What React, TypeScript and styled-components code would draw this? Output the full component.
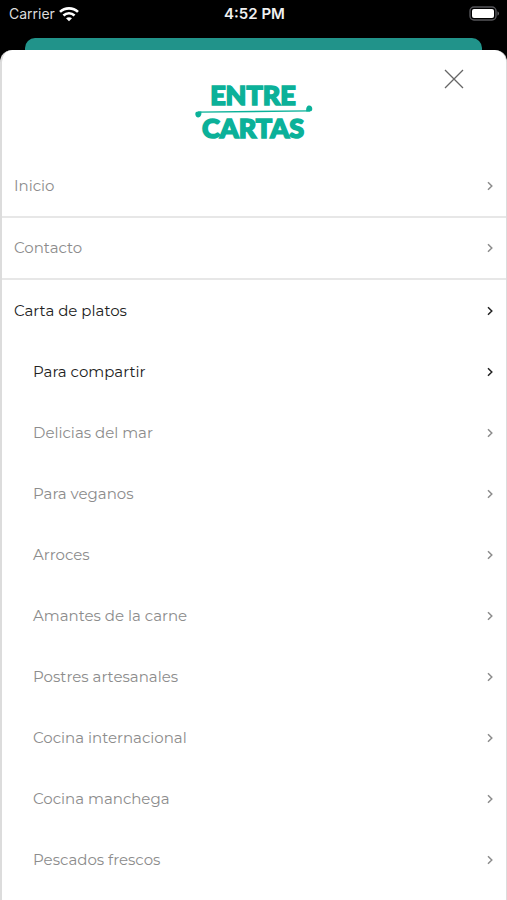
import React from "react";
import styled, { createGlobalStyle } from "styled-components";

const GlobalStyle = createGlobalStyle`
  *, *::before, *::after { box-sizing: border-box; }
  body { margin: 0; background: #000; font-family: Montserrat, Inter, sans-serif; }
`;

const Screen = styled.div`
  display: flex;
  flex-direction: column;
  min-height: 100vh;
  background: #000;
`;

const StatusBar = styled.header`
  display: grid;
  grid-template-columns: 1fr auto 1fr;
  align-items: center;
  height: 38px;
  padding: 0 7px 11px 9px;
  color: #fff;
  font: 400 15px/20px Inter, sans-serif;
`;

const Carrier = styled.div`
  display: flex;
  align-items: center;
  gap: 4px;
  color: #dcdcdc;
  font-size: 14px;
`;

const Clock = styled.time`
  font-weight: 600;
  color: #f0f0f0;
`;

const Battery = styled.svg`
  justify-self: end;
`;

const PreviousCard = styled.div`
  height: 12px;
  margin: 0 25px;
  border-radius: 10px 10px 0 0;
  background: #21938a;
`;

const Sheet = styled.main`
  flex: 1;
  border: solid #dcdcdc;
  border-width: 0 1px 0 2px;
  border-radius: 12px 12px 0 0;
  background: #fff;
`;

const SheetHeader = styled.div`
  display: grid;
  grid-template-columns: 1fr auto 1fr;
  align-items: start;
  height: 106px;
  padding-top: 17px;
`;

const Logo = styled.svg`
  grid-column: 2;
  margin-top: 11px;
  fill: #0bb199;
  stroke: #0bb199;
  font: 900 27px Lato, sans-serif;
`;

const CloseButton = styled.button`
  justify-self: end;
  display: flex;
  margin-right: 40px;
  padding: 0;
  border: 0;
  background: none;
  cursor: pointer;
`;

const List = styled.ul`
  margin: 0;
  padding: 0;
  list-style: none;
`;

const Item = styled.li<{ $divided?: boolean }>`
  border-bottom: ${(p) => (p.$divided ? "2px solid #e7e7e7" : "0")};
`;

const ItemLink = styled.a<{ $active?: boolean; $nested?: boolean; $short?: boolean }>`
  display: flex;
  align-items: center;
  justify-content: space-between;
  height: ${(p) => (p.$short ? 60 : 61)}px;
  padding: 0 12px 0 ${(p) => (p.$nested ? 31 : 12)}px;
  color: ${(p) => (p.$active ? "#222" : "#8c8c8c")};
  font-size: 15px;
  line-height: 20px;
  text-decoration: none;
`;

const topItems = [
  { label: "Inicio", divided: true },
  { label: "Contacto", divided: true },
  { label: "Carta de platos", active: true },
];

const dishes = [
  "Para compartir",
  "Delicias del mar",
  "Para veganos",
  "Arroces",
  "Amantes de la carne",
  "Postres artesanales",
  "Cocina internacional",
  "Cocina manchega",
  "Pescados frescos",
];

const Chevron = () => (
  <svg width="8" height="10" viewBox="0 0 8 10" fill="none" stroke="currentColor" strokeWidth="1.5" aria-hidden="true">
    <path d="M2 1.2 5.8 5 2 8.8" />
  </svg>
);

const WifiIcon = () => (
  <svg width="20" height="16" viewBox="0 0 18 14" fill="none" stroke="#fff" strokeWidth="2.4" aria-hidden="true">
    <path d="M.9 5.1C5.4.9 12.6.9 17.1 5.1" />
    <path d="M4 8.3c2.9-2.6 7.1-2.6 10 0" />
    <path d="M6.3 10.8c1.6-1.3 3.8-1.3 5.4 0L9 13.6z" fill="#fff" stroke="none" />
  </svg>
);

export default function App() {
  return (
    <>
      <GlobalStyle />
      <Screen>
        <StatusBar>
          <Carrier>
            Carrier
            <WifiIcon />
          </Carrier>
          <Clock>4:52 PM</Clock>
          <Battery width="31" height="15" viewBox="0 0 31 15" aria-label="Battery full">
            <rect x="1" y="1" width="26" height="13" rx="4" fill="none" stroke="#55555a" strokeWidth="1.4" />
            <rect x="3" y="3" width="22" height="9" rx="2" fill="#fff" />
            <path d="M28.5 5.3c2 .8 2 3.6 0 4.4z" fill="#66666a" />
          </Battery>
        </StatusBar>
        <PreviousCard />
        <Sheet>
          <SheetHeader>
            <Logo width="120" height="70" viewBox="0 0 120 70" role="img" aria-label="Entre Cartas">
              <text x="59" y="27" textAnchor="middle" strokeWidth="1.6">ENTRE</text>
              <text x="59" y="60" textAnchor="middle" strokeWidth="1.6">CARTAS</text>
              <path d="M4 34.2 116 32.8" strokeWidth="1.3" fill="none" />
              <path d="M1.3 36c0-2 1.4-2.6 3.4-2.4h2.6c.6 3.8-1 5.8-3 5.8-1.8 0-3-1.5-3-3.400z" stroke="none" />
              <path d="M118.3 31c0 2-1.4 2.6-3.4 2.4h-2.6c-.6-3.8 1-5.8 3-5.8 1.8 0 3 1.5 3 3.400z" stroke="none" />
            </Logo>
            <CloseButton type="button" aria-label="Cerrar">
              <svg width="24" height="24" viewBox="0 0 24 24" fill="none" stroke="#666" strokeWidth="1.3">
                <path d="M3 3 21 21M21 3 3 21" />
              </svg>
            </CloseButton>
          </SheetHeader>
          <nav>
            <List>
              {topItems.map((item) => (
                <Item key={item.label} $divided={item.divided}>
                  <ItemLink href="#" $active={item.active} $short={item.divided}>
                    {item.label}
                    <Chevron />
                  </ItemLink>
                  {item.active && (
                    <List>
                      {dishes.map((dish, index) => (
                        <Item key={dish}>
                          <ItemLink href="#" $nested $active={index === 0}>
                            {dish}
                            <Chevron />
                          </ItemLink>
                        </Item>
                      ))}
                    </List>
                  )}
                </Item>
              ))}
            </List>
          </nav>
        </Sheet>
      </Screen>
    </>
  );
}
